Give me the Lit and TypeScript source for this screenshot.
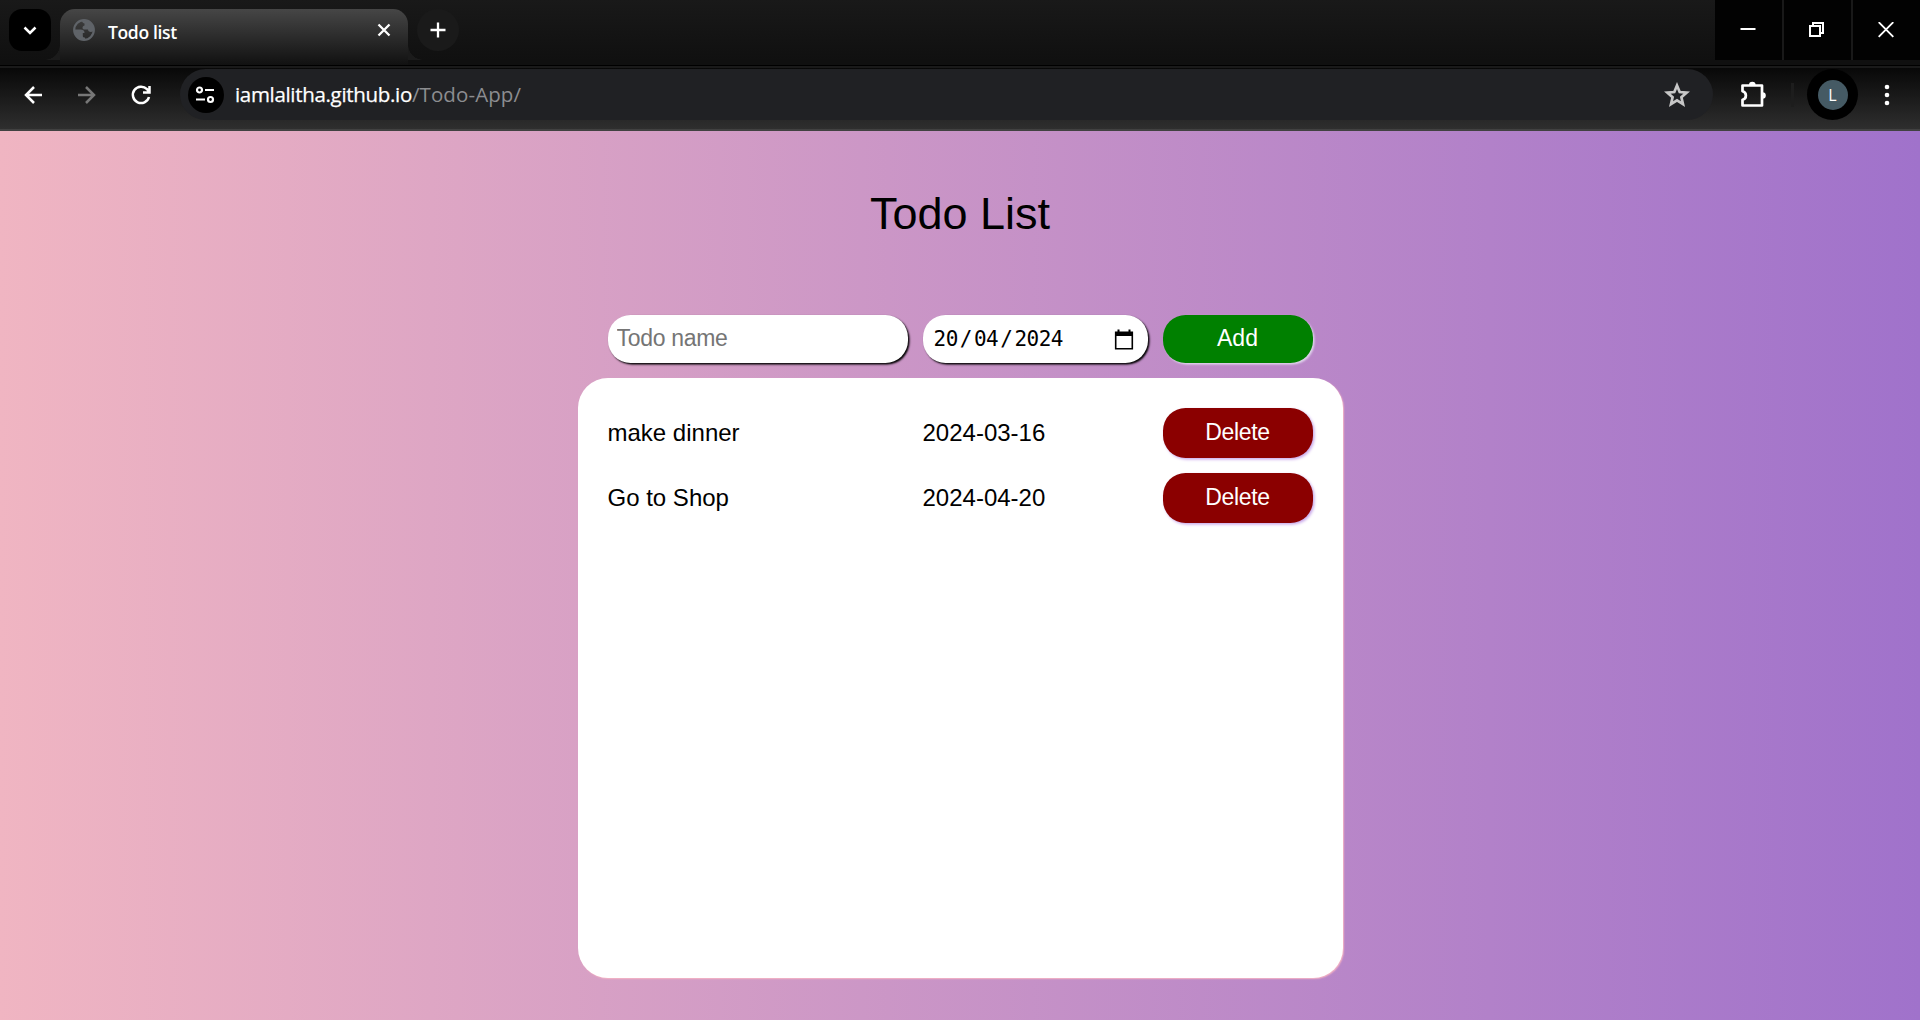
import { LitElement, html, css } from "lit";
import { customElement, property, state } from "lit/decorators.js";

@customElement("browser-chrome")
class BrowserChrome extends LitElement {
  static styles = css`
    :host { display: block; font-family: "Open Sans", "Noto Sans", sans-serif; color: #fff; }
    svg { display: block; flex: none; }
    .tabs { height: 66px; box-sizing: border-box; display: flex; align-items: flex-start; background: linear-gradient(#191919, #101010 60px); border-bottom: 1px solid #000; }
    .search { width: 42px; height: 42px; margin: 9px 0 0 9px; border-radius: 13px; background: #000; display: grid; place-items: center; }
    .tab { position: relative; box-sizing: border-box; width: 348px; height: 56px; margin: 9px 0 0 9px; padding: 0 17px 14px 13px; border-radius: 15px 15px 0 0; background: linear-gradient(#464646, #111); display: flex; align-items: center; }
    .tab::before, .tab::after { content: ""; position: absolute; bottom: 5px; width: 15px; height: 15px; }
    .tab::before { left: -15px; background: radial-gradient(circle at 0 0, transparent 14.5px, #1b1b1b 15px); }
    .tab::after { right: -15px; background: radial-gradient(circle at 100% 0, transparent 14.5px, #1b1b1b 15px); }
    .title { flex: 1; margin-left: 13px; font: 600 17.5px/24px "Open Sans", sans-serif; letter-spacing: -.35px; padding-top: 3px; }
    .new { width: 42px; height: 42px; margin: 9px 0 0 9px; border-radius: 50%; background: #1a1a1a; display: grid; place-items: center; }
    .controls { margin-left: auto; display: flex; gap: 2px; background: #191919; height: 60px; }
    .control { width: 67px; height: 60px; background: #020202; display: grid; place-items: center; padding-right: 2px; box-sizing: border-box; }
    .bar { height: 65px; box-sizing: border-box; display: flex; align-items: flex-start; background: linear-gradient(#080808, #2f2f2f 62px); border-top: 2px solid #1a1a1a; border-bottom: 2px solid #414141; padding: 1px 0 0; }
    .nav { display: flex; align-items: center; height: 51px; width: 180px; box-sizing: border-box; padding-left: 22px; gap: 32px; }
    .address { flex: none; width: 1533px; height: 51px; border-radius: 26px; background: #202124; display: flex; align-items: center; box-sizing: border-box; padding: 0 23px 0 8px; }
    .site { width: 36px; height: 36px; border-radius: 50%; background: #000; display: grid; place-items: center; padding-right: 2px; box-sizing: border-box; }
    .url { flex: 1; margin: 0 0 2px 11px; font-size: 20.5px; line-height: 28px; letter-spacing: -.32px; white-space: nowrap; -webkit-text-stroke: .25px currentColor; }
    .path { color: #8c8d90; letter-spacing: .1px; -webkit-text-stroke: 0; }
    .tools { display: flex; align-items: center; height: 51px; }
    .ext { margin: 0 0 2px 26px; }
    .rule { width: 3px; height: 24px; background: #1d1d1d; margin: 0 14px 0 24px; }
    .avatar { width: 51px; height: 51px; border-radius: 50%; background: #000; display: grid; place-items: center; margin: 0 26px 0 -1px; }
    .letter { width: 30px; height: 30px; border-radius: 50%; background: #455a64; font: 16px/31px "Open Sans", sans-serif; text-align: center; }
  `;
  render() {
    return html`
      <div class="tabs">
        <div class="search"><svg width="14" height="9" viewBox="0 0 14 9"><path d="M1.500 1.500 7 7l5.500-5.500" fill="none" stroke="#fff" stroke-width="2.500"/></svg></div>
        <div class="tab">
          <svg width="22" height="22" viewBox="0 0 22 22"><circle cx="11" cy="11" r="9.800" fill="none" stroke="#5f6368" stroke-width="2.200"/><path d="M9 1.500 14 1c5 2 7 6 7 10-1 1-1.500 2-3 2-2 0-3-1-3-2.500h-4c-1 0-1.500-1-1.500-2s1-2 2-2V4.500c-1 0-2.500-1-2.500-3ZM1 10.500h6.500c3 0 4 1.500 4 3.500H9.800v3c0 1 1 1.500 2.200 1.500V21C5 21 1 16 1 10.500Z" fill="#5f6368"/></svg>
          <span class="title">Todo list</span>
          <svg width="14" height="14" viewBox="0 0 14 14"><path d="m1.500 1.500 11 11m0-11-11 11" stroke="#fff" stroke-width="2.300"/></svg>
        </div>
        <div class="new"><svg width="16" height="16" viewBox="0 0 16 16"><path d="M8 .5v15M.5 8h15" stroke="#fff" stroke-width="2.300"/></svg></div>
        <div class="controls">
          <div class="control"><svg width="16" height="16"><path d="M.5 7h15" stroke="#fff" stroke-width="2"/></svg></div>
          <div class="control"><svg width="16" height="16" fill="none" stroke="#fff" stroke-width="2"><path d="M1 4h10v10H1zM4 4V1h10v10h-3"/></svg></div>
          <div class="control"><svg width="16" height="16"><path d="m.7.2 14.600 14.600m0-14.600L.7 14.800" stroke="#fff" stroke-width="1.900"/></svg></div>
        </div>
      </div>
      <div class="bar">
        <div class="nav">
          <svg width="22" height="20" viewBox="0 0 22 20" fill="none" stroke="#fff" stroke-width="2.500"><path d="M20 10H4M12 2l-8 8 8 8"/></svg>
          <svg width="22" height="20" viewBox="0 0 22 20" fill="none" stroke="#777" stroke-width="2.500"><path d="M2 10h16M10 2l8 8-8 8"/></svg>
          <svg width="22" height="22" viewBox="0 0 22 22" fill="none" stroke="#fff" stroke-width="2.500"><path d="M19 13a8.200 8.200 0 1 1-2-7.800l2 2.300M19.500 2v6.500H13"/></svg>
        </div>
        <div class="address">
          <div class="site"><svg width="20" height="18" viewBox="0 0 20 18" fill="none" stroke="#fff" stroke-width="2.200"><circle cx="4.500" cy="4" r="2.500"/><path d="M10 4h9M1 13.500h9"/><circle cx="15.500" cy="13.500" r="2.500"/></svg></div>
          <span class="url">iamlalitha.github.io<span class="path">/Todo-App/</span></span>
          <svg width="26" height="26" viewBox="0 0 26 26"><path d="m13 3.500 2.700 6.500 7 .6-5.300 4.600 1.600 6.900-6-3.700-6 3.700 1.600-6.900-5.300-4.600 7-.6Z" fill="none" stroke="#c7c7c7" stroke-width="2.700"/></svg>
        </div>
        <div class="tools">
          <svg class="ext" width="28" height="28" viewBox="0 0 28 28"><path d="M3.500 5.500h19.500v20H3.500v-5.700c4.500-1 4.500-7.500 0-8.600Z" fill="none" stroke="#fff" stroke-width="2.700" stroke-linejoin="round"/><path d="M10 5a3.300 3.300 0 0 1 6.600 0ZM23.500 12.200a3.300 3.300 0 0 1 0 6.600Z" fill="#fff"/></svg>
          <div class="rule"></div>
          <div class="avatar"><span class="letter">L</span></div>
          <svg width="6" height="22" fill="#fff"><circle cx="3" cy="3" r="2.300"/><circle cx="3" cy="11" r="2.300"/><circle cx="3" cy="19" r="2.300"/></svg>
        </div>
      </div>`;
  }
}

@customElement("todo-row")
class TodoRow extends LitElement {
  @property() name = "";
  @property() due = "";
  static styles = css`
    :host { display: grid; grid-template-columns: 300px 225px 150px; gap: 15px; align-items: center; font-size: 24px; color: #000; }
    button { height: 50px; border: 0; border-radius: 22.5px; background: darkred; color: #fff; font: 23px "Liberation Sans", Arial, sans-serif; letter-spacing: -.35px; padding: 0 0 2px; box-shadow: 1.5px 1.5px 3px #c9a8ea; }
  `;
  render() {
    return html`<span>${this.name}</span><span>${this.due}</span>
      <button @click=${() => this.dispatchEvent(new CustomEvent("remove"))}>Delete</button>`;
  }
}

@customElement("app-root")
class AppRoot extends LitElement {
  @state() private todos = [
    { name: "make dinner", due: "2024-03-16" },
    { name: "Go to Shop", due: "2024-04-20" },
  ];
  static styles = css`
    :host { display: flex; flex-direction: column; height: 1020px; overflow: hidden; font-family: "Liberation Sans", Arial, sans-serif; }
    main { flex: 1; display: flex; flex-direction: column; align-items: center; background: linear-gradient(to right, #f0b5c2, #a072cb); }
    h1 { margin: 57px 0 0; font-size: 45px; line-height: 52px; font-weight: 400; color: #000; }
    form { margin: 75px 0 15px; display: grid; grid-template-columns: 300px 225px 150px; gap: 15px; height: 48px; }
    .field { box-sizing: border-box; width: 100%; height: 48px; border: 0; border-radius: 22.5px; background: #fff; box-shadow: 1.5px 1.5px 2px #000; outline: 0; }
    .name { font: 23px "Liberation Sans", Arial, sans-serif; letter-spacing: -.3px; padding: 0 9px 2px; }
    .name::placeholder { color: #757575; opacity: 1; }
    .date { display: flex; align-items: center; justify-content: space-between; padding: 0 14px 0 11px; font: 21px "DejaVu Sans Mono", monospace; letter-spacing: -.5px; }
    .digits { display: flex; }
    .slash { padding: 0 2px; }
    .add { height: 48px; border: 0; border-radius: 22.5px; background: green; color: #fff; font: 23px "Liberation Sans", Arial, sans-serif; padding: 0 0 2px; box-shadow: 1.5px 1.5px 2px #e0d4ec; }
    .list { box-sizing: border-box; width: 765px; height: 600px; padding: 30px; border-radius: 30px; background: #fff; box-shadow: 1px 1px 1.5px #f5b4c4; display: flex; flex-direction: column; gap: 15px; }
  `;
  private remove(index: number) {
    this.todos = this.todos.filter((_, i) => i !== index);
  }
  render() {
    return html`
      <browser-chrome></browser-chrome>
      <main>
        <h1>Todo List</h1>
        <form @submit=${(e: Event) => e.preventDefault()}>
          <input class="field name" placeholder="Todo name" />
          <div class="field date">
            <span class="digits">20<span class="slash">/</span>04<span class="slash">/</span>2024</span>
            <svg width="20" height="21" viewBox="0 0 20 21"><path d="M1.700 3.200h16.600v16.500H1.700z" fill="none" stroke="#000" stroke-width="1.600"/><path d="M1 3h18v4H1zM3.500.5h2V4h-2zM14.500.5h2V4h-2z"/></svg>
          </div>
          <button class="add">Add</button>
        </form>
        <section class="list">
          ${this.todos.map((t, i) => html`<todo-row .name=${t.name} .due=${t.due} @remove=${() => this.remove(i)}></todo-row>`)}
        </section>
      </main>`;
  }
}
